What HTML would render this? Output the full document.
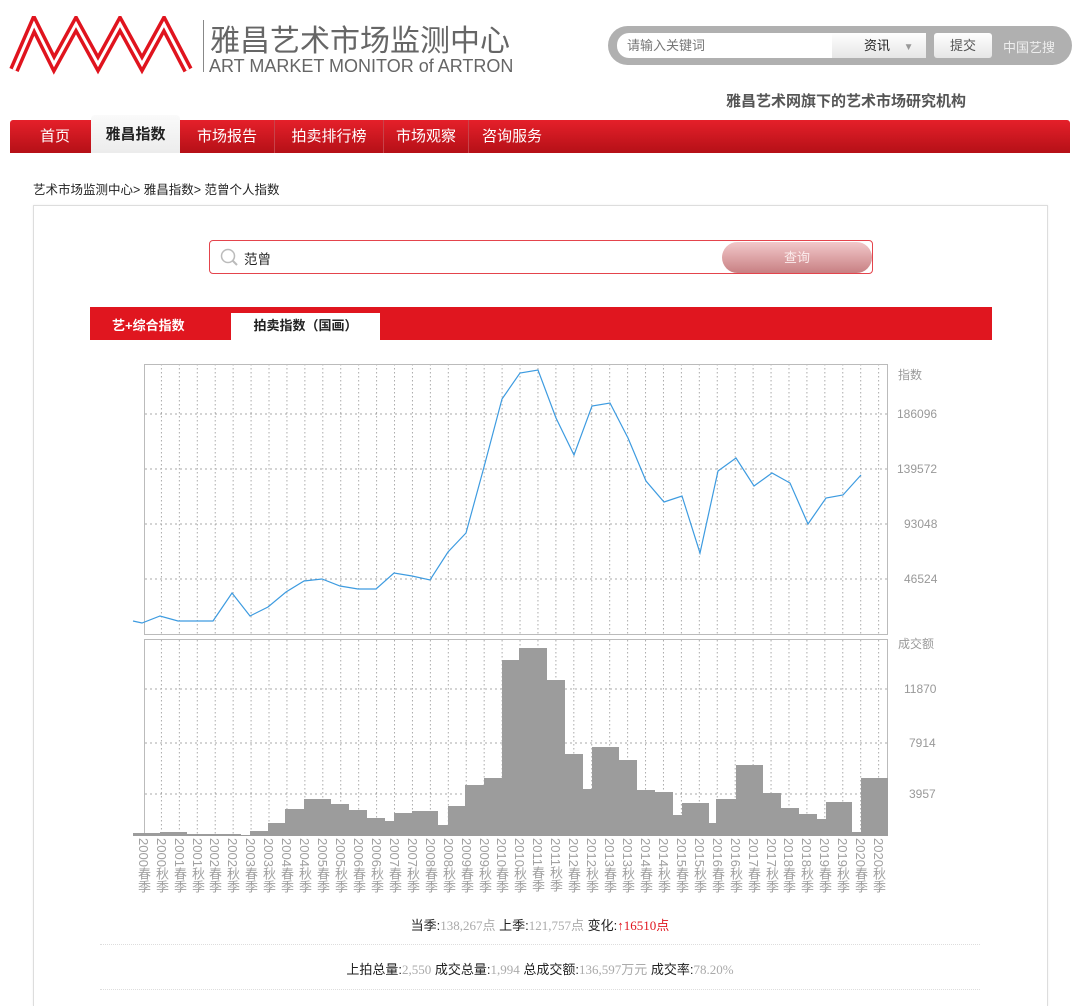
<!DOCTYPE html>
<html><head><meta charset="utf-8"><style>
body{margin:0;width:1080px;height:1000px;background:#fff;font-family:"Liberation Sans","Noto Sans CJK SC",sans-serif;position:relative;overflow:hidden}
.a{position:absolute}
.nav{left:10px;top:120px;width:1060px;height:33px;background:linear-gradient(#e5202a,#b51017);border-radius:3px 3px 0 0}
.nav div{position:absolute;top:0;height:33px;line-height:33px;color:#fff;font-size:15px;text-align:center;border-right:1px solid #c8434a}
.lab{position:absolute;top:838px;writing-mode:vertical-rl;font-size:13px;color:#a0a0a0;line-height:14px;white-space:nowrap}
</style></head><body>
<svg class="a" style="left:8px;top:16px" width="190" height="60" viewBox="0 0 190 60">
<path d="M6 54 L26 8 L46 48 L68 8 L90 48 L112 8 L134 48 L156 8 L180 54" fill="none" stroke="#e0141e" stroke-width="10" stroke-linejoin="miter"/>
<path d="M6 54 L26 8 L46 48 L68 8 L90 48 L112 8 L134 48 L156 8 L180 54" fill="none" stroke="#fff" stroke-width="3" stroke-linejoin="miter"/>
</svg>
<div class="a" style="left:203px;top:20px;width:1px;height:52px;background:#888"></div>
<div class="a" style="left:210px;top:16px;font-size:30px;color:#666">雅昌艺术市场监测中心</div>
<div class="a" style="left:209px;top:56px;font-size:18px;color:#666">ART MARKET MONITOR of ARTRON</div>
<div class="a" style="left:608px;top:26px;width:464px;height:39px;background:#b0b0b0;border-radius:20px"></div>
<div class="a" style="left:617px;top:33px;width:215px;height:25px;background:#fff;border-radius:12px 0 0 12px;font-size:13px;color:#777;line-height:25px;text-indent:10px">请输入关键词</div>
<div class="a" style="left:832px;top:33px;width:94px;height:25px;background:linear-gradient(#fff,#e6e6e6);font-size:13px;color:#222;line-height:25px;text-indent:32px">资讯 <span style="color:#999;font-size:10px;margin-left:10px">▼</span></div>
<div class="a" style="left:934px;top:33px;width:58px;height:25px;background:linear-gradient(#fff,#e6e6e6);border-radius:3px;font-size:13px;color:#555;line-height:25px;text-align:center">提交</div>
<div class="a" style="left:1003px;top:37px;font-size:13px;color:#eee">中国艺搜</div>
<div class="a" style="left:726px;top:90px;font-size:15px;color:#555;font-weight:bold">雅昌艺术网旗下的艺术市场研究机构</div>
<div class="a nav">
<div style="left:0;width:90px;border:none">首页</div>
<div style="left:81px;top:-5px;width:89px;height:38px;line-height:40px;background:linear-gradient(#fafafa,#ececec);color:#222;font-weight:bold;border-radius:4px 4px 0 0;border:none">雅昌指数</div>
<div style="left:170px;width:94px">市场报告</div>
<div style="left:265px;width:108px">拍卖排行榜</div>
<div style="left:374px;width:84px">市场观察</div>
<div style="left:459px;width:86px;border:none">咨询服务</div>
</div>
<div class="a" style="left:33px;top:179px;font-size:12.5px;color:#222">艺术市场监测中心&gt; 雅昌指数&gt; 范曾个人指数</div>
<div class="a" style="left:33px;top:205px;width:1013px;height:800px;border:1px solid #ddd;border-bottom:none;box-shadow:0 0 2px #eee"></div>
<div class="a" style="left:209px;top:240px;width:662px;height:32px;border:1px solid #e4444c;border-radius:4px;background:#fff"></div>
<svg class="a" style="left:220px;top:248px" width="20" height="20"><circle cx="8" cy="8" r="6.5" fill="none" stroke="#bbb" stroke-width="1.5"/><path d="M12.5 12.5 L17 17" stroke="#bbb" stroke-width="2"/></svg>
<div class="a" style="left:244px;top:248px;font-size:13.5px;color:#222">范曾</div>
<div class="a" style="left:722px;top:242px;width:150px;height:31px;border-radius:16px;background:linear-gradient(#f2c8ca,#c88083);color:#fbecec;font-size:13px;text-align:center;line-height:31px">查询</div>
<div class="a" style="left:90px;top:307px;width:902px;height:33px;background:#e0161f"></div>
<div class="a" style="left:112px;top:315px;font-size:13px;color:#fff;font-weight:bold">艺+综合指数</div>
<div class="a" style="left:231px;top:313px;width:149px;height:27px;background:#fff;font-size:13px;color:#222;text-align:center;line-height:25px;font-weight:bold">拍卖指数（国画）</div>
<svg class="a" style="left:0;top:0" width="1080" height="1000">
<defs><pattern id="vg" x="143" y="0" width="17.93" height="4" patternUnits="userSpaceOnUse"><rect x="0" y="0" width="1" height="1.5" fill="#aaa"/></pattern></defs>
<rect x="144.5" y="364.5" width="743" height="270" fill="none" stroke="#bbb"/>
<rect x="145" y="365" width="742" height="269" fill="url(#vg)"/>
<g stroke="#aaa" stroke-dasharray="2 3"><line x1="145" x2="887" y1="414" y2="414"/><line x1="145" x2="887" y1="469" y2="469"/><line x1="145" x2="887" y1="524" y2="524"/><line x1="145" x2="887" y1="579" y2="579"/>
<line x1="145" x2="887" y1="689" y2="689"/><line x1="145" x2="887" y1="743" y2="743"/><line x1="145" x2="887" y1="794" y2="794"/></g>
<rect x="144.5" y="639.5" width="743" height="196" fill="none" stroke="#bbb"/>
<rect x="145" y="640" width="742" height="195" fill="url(#vg)"/>
<polyline fill="none" stroke="#3d9be0" stroke-width="1.2" points="133,621 142,623 160,616 178,621 196,621 213,621 232,593 250,616 268,607 286,592 304,581 322,579 340,586 358,589 376,589 394,573 412,576 430,580 448,552 466,533 484,467 502,399 520,373 538,370 556,418 574,455 592,406 610,403 628,438 646,481 664,502 682,496 700,553 718,471 736,458 754,486 772,473 790,483 808,524 826,498 843,495 861,475"/>
<path fill="#9c9c9c" d="M133 836 V833 H160 V832 H187 V834 H241 V835 H250 V831 H268 V823 H285 V809 H304 V799 H331 V804 H349 V810 H367 V818 H385 V821 H394 V813 H412 V811 H438 V825 H448 V806 H465 V785 H484 V778 H502 V660 H519 V648 H547 V680 H565 V754 H583 V789 H592 V747 H619 V760 H637 V790 H655 V792 H673 V815 H682 V803 H709 V823 H716 V799 H736 V765 H763 V793 H781 V808 H799 V814 H817 V819 H826 V802 H852 V832 H861 V778 H888 V836 Z"/>
<g font-size="12" fill="#999" font-family="Liberation Sans,Noto Sans CJK SC,sans-serif">
<text x="898" y="379">指数</text><text x="897" y="418">186096</text><text x="897" y="473">139572</text><text x="904" y="528">93048</text><text x="904" y="583">46524</text>
<text x="898" y="648">成交额</text><text x="904" y="693">11870</text><text x="909" y="747">7914</text><text x="909" y="798">3957</text>
</g></svg>
<div class="lab" style="left:136px">2000春季</div><div class="lab" style="left:154px">2000秋季</div><div class="lab" style="left:172px">2001春季</div><div class="lab" style="left:190px">2001秋季</div><div class="lab" style="left:207px">2002春季</div><div class="lab" style="left:225px">2002秋季</div><div class="lab" style="left:243px">2003春季</div><div class="lab" style="left:261px">2003秋季</div><div class="lab" style="left:279px">2004春季</div><div class="lab" style="left:297px">2004秋季</div><div class="lab" style="left:315px">2005春季</div><div class="lab" style="left:333px">2005秋季</div><div class="lab" style="left:351px">2006春季</div><div class="lab" style="left:369px">2006秋季</div><div class="lab" style="left:387px">2007春季</div><div class="lab" style="left:405px">2007秋季</div><div class="lab" style="left:423px">2008春季</div><div class="lab" style="left:441px">2008秋季</div><div class="lab" style="left:459px">2009春季</div><div class="lab" style="left:477px">2009秋季</div><div class="lab" style="left:494px">2010春季</div><div class="lab" style="left:512px">2010秋季</div><div class="lab" style="left:530px">2011春季</div><div class="lab" style="left:548px">2011秋季</div><div class="lab" style="left:566px">2012春季</div><div class="lab" style="left:584px">2012秋季</div><div class="lab" style="left:602px">2013春季</div><div class="lab" style="left:620px">2013秋季</div><div class="lab" style="left:638px">2014春季</div><div class="lab" style="left:656px">2014秋季</div><div class="lab" style="left:674px">2015春季</div><div class="lab" style="left:692px">2015秋季</div><div class="lab" style="left:710px">2016春季</div><div class="lab" style="left:728px">2016秋季</div><div class="lab" style="left:746px">2017春季</div><div class="lab" style="left:764px">2017秋季</div><div class="lab" style="left:781px">2018春季</div><div class="lab" style="left:799px">2018秋季</div><div class="lab" style="left:817px">2019春季</div><div class="lab" style="left:835px">2019秋季</div><div class="lab" style="left:853px">2020春季</div><div class="lab" style="left:871px">2020秋季</div>
<div class="a" style="left:0;width:1080px;top:915px;text-align:center;font-size:13px;color:#222">当季:<span style="color:#aaa;font-family:'Liberation Serif',serif">138,267点</span> 上季:<span style="color:#aaa;font-family:'Liberation Serif',serif">121,757点</span> 变化:<span style="color:#e0161f;font-family:'Liberation Serif',serif">↑16510点</span></div>
<div class="a" style="left:100px;top:944px;width:880px;border-top:1px dotted #ddd"></div>
<div class="a" style="left:0;width:1080px;top:959px;text-align:center;font-size:13px;color:#222">上拍总量:<span style="color:#aaa;font-family:'Liberation Serif',serif">2,550</span> 成交总量:<span style="color:#aaa;font-family:'Liberation Serif',serif">1,994</span> 总成交额:<span style="color:#aaa;font-family:'Liberation Serif',serif">136,597万元</span> 成交率:<span style="color:#aaa;font-family:'Liberation Serif',serif">78.20%</span></div>
<div class="a" style="left:100px;top:989px;width:880px;border-top:1px dotted #ddd"></div>
</body></html>
